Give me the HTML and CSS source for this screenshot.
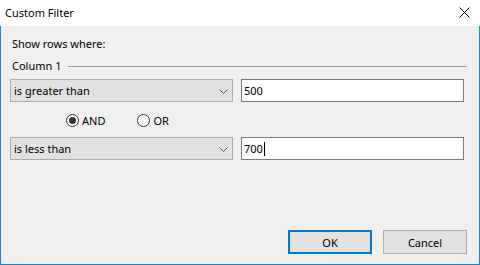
FILE: index.html
```html
<!DOCTYPE html>
<html>
<head>
<meta charset="utf-8">
<link rel="stylesheet" href="styles.css">
</head>
<body>
<div class="window">
  <div class="titlebar">
    <span class="title">Custom Filter</span>
    <svg class="close" width="11" height="11" viewBox="0 0 11 11"><path d="M0.5 0.5 L10.5 10.5 M10.5 0.5 L0.5 10.5" stroke="#000" stroke-width="1" fill="none"/></svg>
  </div>
  <div class="client">
    <div class="label">Show rows where:</div>
    <div class="group">
      <span class="group-title">Column 1</span>
      <span class="group-line"></span>
    </div>
    <div class="row">
      <div class="combo"><span>is greater than</span>
        <svg class="chev" width="9" height="5" viewBox="0 0 9 5"><path d="M0.5 0.5 L4.5 4.5 L8.5 0.5" stroke="#555" stroke-width="1" fill="none"/></svg>
      </div>
      <div class="textbox">500</div>
    </div>
    <div class="radios">
      <span class="radio checked"><span class="circle"><span class="dot"></span></span>AND</span>
      <span class="radio"><span class="circle"></span>OR</span>
    </div>
    <div class="row">
      <div class="combo"><span>is less than</span>
        <svg class="chev" width="9" height="5" viewBox="0 0 9 5"><path d="M0.5 0.5 L4.5 4.5 L8.5 0.5" stroke="#555" stroke-width="1" fill="none"/></svg>
      </div>
      <div class="textbox">700<span class="caret"></span></div>
    </div>
    <div class="buttons">
      <div class="btn default">OK</div>
      <div class="btn">Cancel</div>
    </div>
  </div>
</div>
</body>
</html>
```

FILE: styles.css
```css
html, body {
  margin: 0;
  padding: 0;
}
body {
  width: 480px;
  height: 265px;
  overflow: hidden;
  font-family: "Noto Sans", "Open Sans", sans-serif;
  font-size: 11px;
  color: #000;
}
.window {
  width: 480px;
  height: 265px;
  display: flex;
  flex-direction: column;
}
.titlebar {
  height: 26px;
  background: #fff;
  display: flex;
  align-items: center;
  justify-content: space-between;
  padding: 0 10px 0 5px;
}
.title {
  font-size: 11px;
  line-height: 15px;
  margin-top: -1px;
}
.close {
  display: block;
  margin-top: -1px;
}
.client {
  flex: 1;
  background: #f0f0f0;
  border: 1px solid #1883d7;
  border-top: none;
  padding: 10px 0 0 9px;
  display: flex;
  flex-direction: column;
}
.label {
  line-height: 15px;
  padding-left: 2px;
}
.group {
  display: flex;
  align-items: center;
  margin-top: 7px;
  padding-left: 2px;
  line-height: 15px;
  width: 455px;
}
.group-title {
  margin-right: 7px;
}
.group-line {
  flex: 1;
  height: 1px;
  background: #a0a0a0;
  margin-top: 1px;
}
.row {
  display: flex;
  gap: 8px;
  margin-top: 6px;
}
.radios + .row {
  margin-top: 10px;
}
.combo {
  box-sizing: border-box;
  width: 223px;
  height: 23px;
  background: #e1e1e1;
  border: 1px solid #adadad;
  display: flex;
  align-items: center;
  justify-content: space-between;
  padding: 0 4px 0 3px;
  line-height: 15px;
}
.chev {
  display: block;
  margin-right: 0;
  margin-top: 1px;
}
.textbox {
  box-sizing: border-box;
  width: 223px;
  height: 23px;
  background: #fff;
  border: 1px solid #7a7a7a;
  padding: 0 2px;
  display: flex;
  align-items: center;
  line-height: 15px;
}
.caret {
  display: inline-block;
  width: 1px;
  height: 14px;
  background: #000;
  margin-left: 1px;
}
.radios {
  display: flex;
  margin-top: 12px;
  padding-left: 56px;
  height: 13px;
  align-items: center;
  gap: 32px;
}
.radio {
  display: flex;
  align-items: center;
  line-height: 15px;
}
.circle {
  box-sizing: border-box;
  width: 13px;
  height: 13px;
  border: 1px solid #333;
  border-radius: 50%;
  background: #fff;
  margin-right: 3px;
  display: flex;
  align-items: center;
  justify-content: center;
}
.dot {
  width: 7px;
  height: 7px;
  border-radius: 50%;
  background: #333;
}
.buttons {
  display: flex;
  justify-content: flex-end;
  gap: 11px;
  margin-top: auto;
  margin-bottom: 10px;
  padding-right: 12px;
}
.btn {
  box-sizing: border-box;
  width: 84px;
  height: 24px;
  background: #e1e1e1;
  border: 1px solid #adadad;
  display: flex;
  align-items: center;
  justify-content: center;
  line-height: 15px;
}
.btn.default {
  border: 2px solid #0078d7;
}
```
